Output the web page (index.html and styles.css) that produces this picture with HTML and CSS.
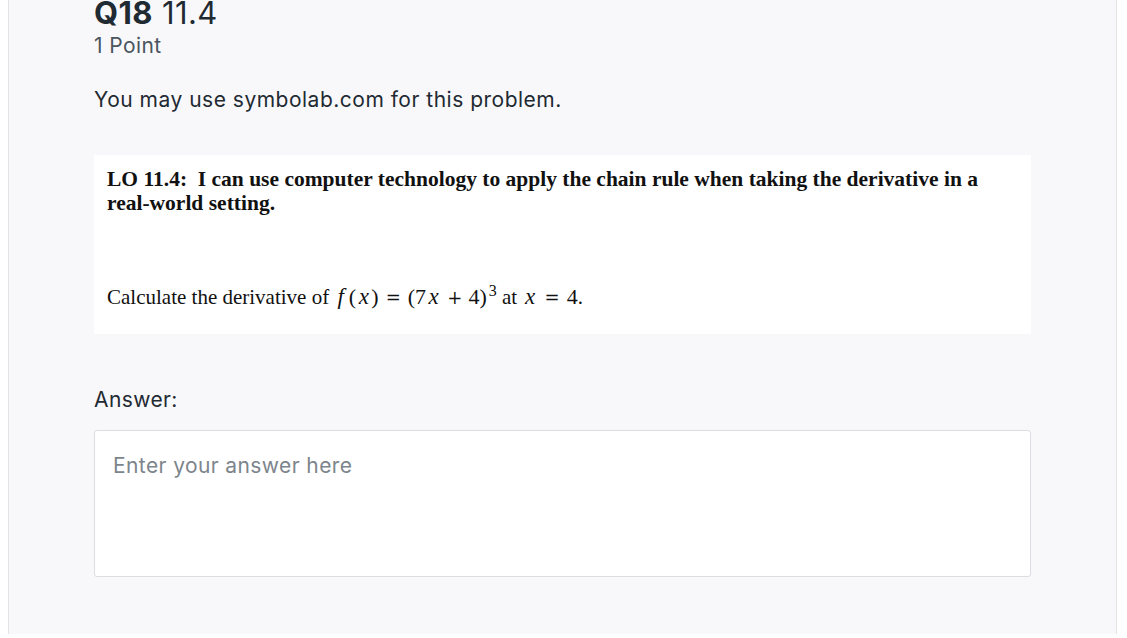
FILE: index.html
```html
<!DOCTYPE html>
<html lang="en">
<head>
<meta charset="utf-8">
<title>Q18 11.4</title>
<link rel="stylesheet" href="styles.css">
</head>
<body>
<div class="panel">
  <div class="question">
    <h2 class="q-title"><span class="q-num">Q18</span> 11.4</h2>
    <div class="q-points">1 Point</div>
    <p class="q-note">You may use symbolab.com for this problem.</p>
    <div class="q-body">
      <p class="lo">LO 11.4:&nbsp; I can use computer technology to apply the chain rule when taking the derivative in a <span class="nowrap">real-world</span> setting.</p>
      <p class="calc">Calculate the derivative of <span class="math"><i class="fn">f</i>(<i class="var">x</i>)<span class="rel">=</span>(7<i class="var">x</i><span class="bin">+</span>4)<sup>3</sup></span> at <span class="math"><i class="var">x</i><span class="rel">=</span>4</span>.</p>
    </div>
    <div class="answer-label">Answer:</div>
    <textarea class="answer" placeholder="Enter your answer here"></textarea>
  </div>
</div>
</body>
</html>
```
FILE: styles.css
```css
html, body {
  margin: 0;
  padding: 0;
  background: #ffffff;
  height: 100%;
}
body {
  font-family: Inter, "Open Sans", sans-serif;
  color: #1f2a33;
}
.panel {
  margin: 0 10px 0 8px;
  min-height: 100%;
  background: #f8f8fa;
  border-left: 1px solid #e3e3e8;
  border-right: 1px solid #e3e3e8;
  box-sizing: border-box;
}
.question {
  padding: 0 85px;
}
.q-title {
  margin: -4px 0 0 0;
  font-size: 31px;
  line-height: 34px;
  font-weight: 400;
  letter-spacing: 0.4px;
  color: #1f2a33;
}
.q-num {
  font-weight: 700;
}
.q-points {
  margin-top: 4px;
  font-size: 21px;
  line-height: 24px;
  letter-spacing: 0.4px;
  color: #4a555f;
}
.q-note {
  margin: 29px 0 0 0;
  font-size: 21px;
  line-height: 26px;
  letter-spacing: 0.5px;
  color: #1f2a33;
}
.q-body {
  margin-top: 42px;
  background: #ffffff;
  padding: 13px 13px 24px 13px;
  font-family: "Liberation Serif", "Times New Roman", serif;
  color: #111111;
}
.lo {
  margin: 0;
  font-weight: 700;
  font-size: 21.5px;
  line-height: 23.5px;
}
.nowrap {
  white-space: nowrap;
}
.calc {
  margin: 70px 0 0 0;
  font-size: 21px;
  line-height: 23.5px;
}
.math {
  font-family: "Liberation Serif", "Times New Roman", serif;
  font-size: 22px;
}
.math i {
  font-size: 23px;
}
.fn {
  margin-left: 3px;
  margin-right: 5px;
}
.var {
  margin: 0 2.5px;
}
.rel,
.bin {
  font-family: "DejaVu Serif", "Liberation Serif", serif;
  font-size: 18px;
  line-height: 0;
}
.rel {
  margin: 0 7px;
}
.bin {
  margin: 0 6px;
}
.math sup {
  font-size: 16px;
  line-height: 0;
  margin-left: 2px;
  vertical-align: 8px;
}
.answer-label {
  margin-top: 53px;
  font-size: 21px;
  line-height: 26px;
  letter-spacing: 0.4px;
  color: #1f2a33;
}
.answer {
  display: block;
  margin-top: 17px;
  width: 100%;
  height: 147px;
  box-sizing: border-box;
  border: 1px solid #dcdce2;
  border-radius: 3px;
  background: #ffffff;
  padding: 22px 18px;
  font-family: Inter, "Open Sans", sans-serif;
  font-size: 21px;
  line-height: 26px;
  letter-spacing: 0.4px;
  resize: none;
  outline: none;
}
.answer::placeholder {
  color: #7d858c;
}
```
